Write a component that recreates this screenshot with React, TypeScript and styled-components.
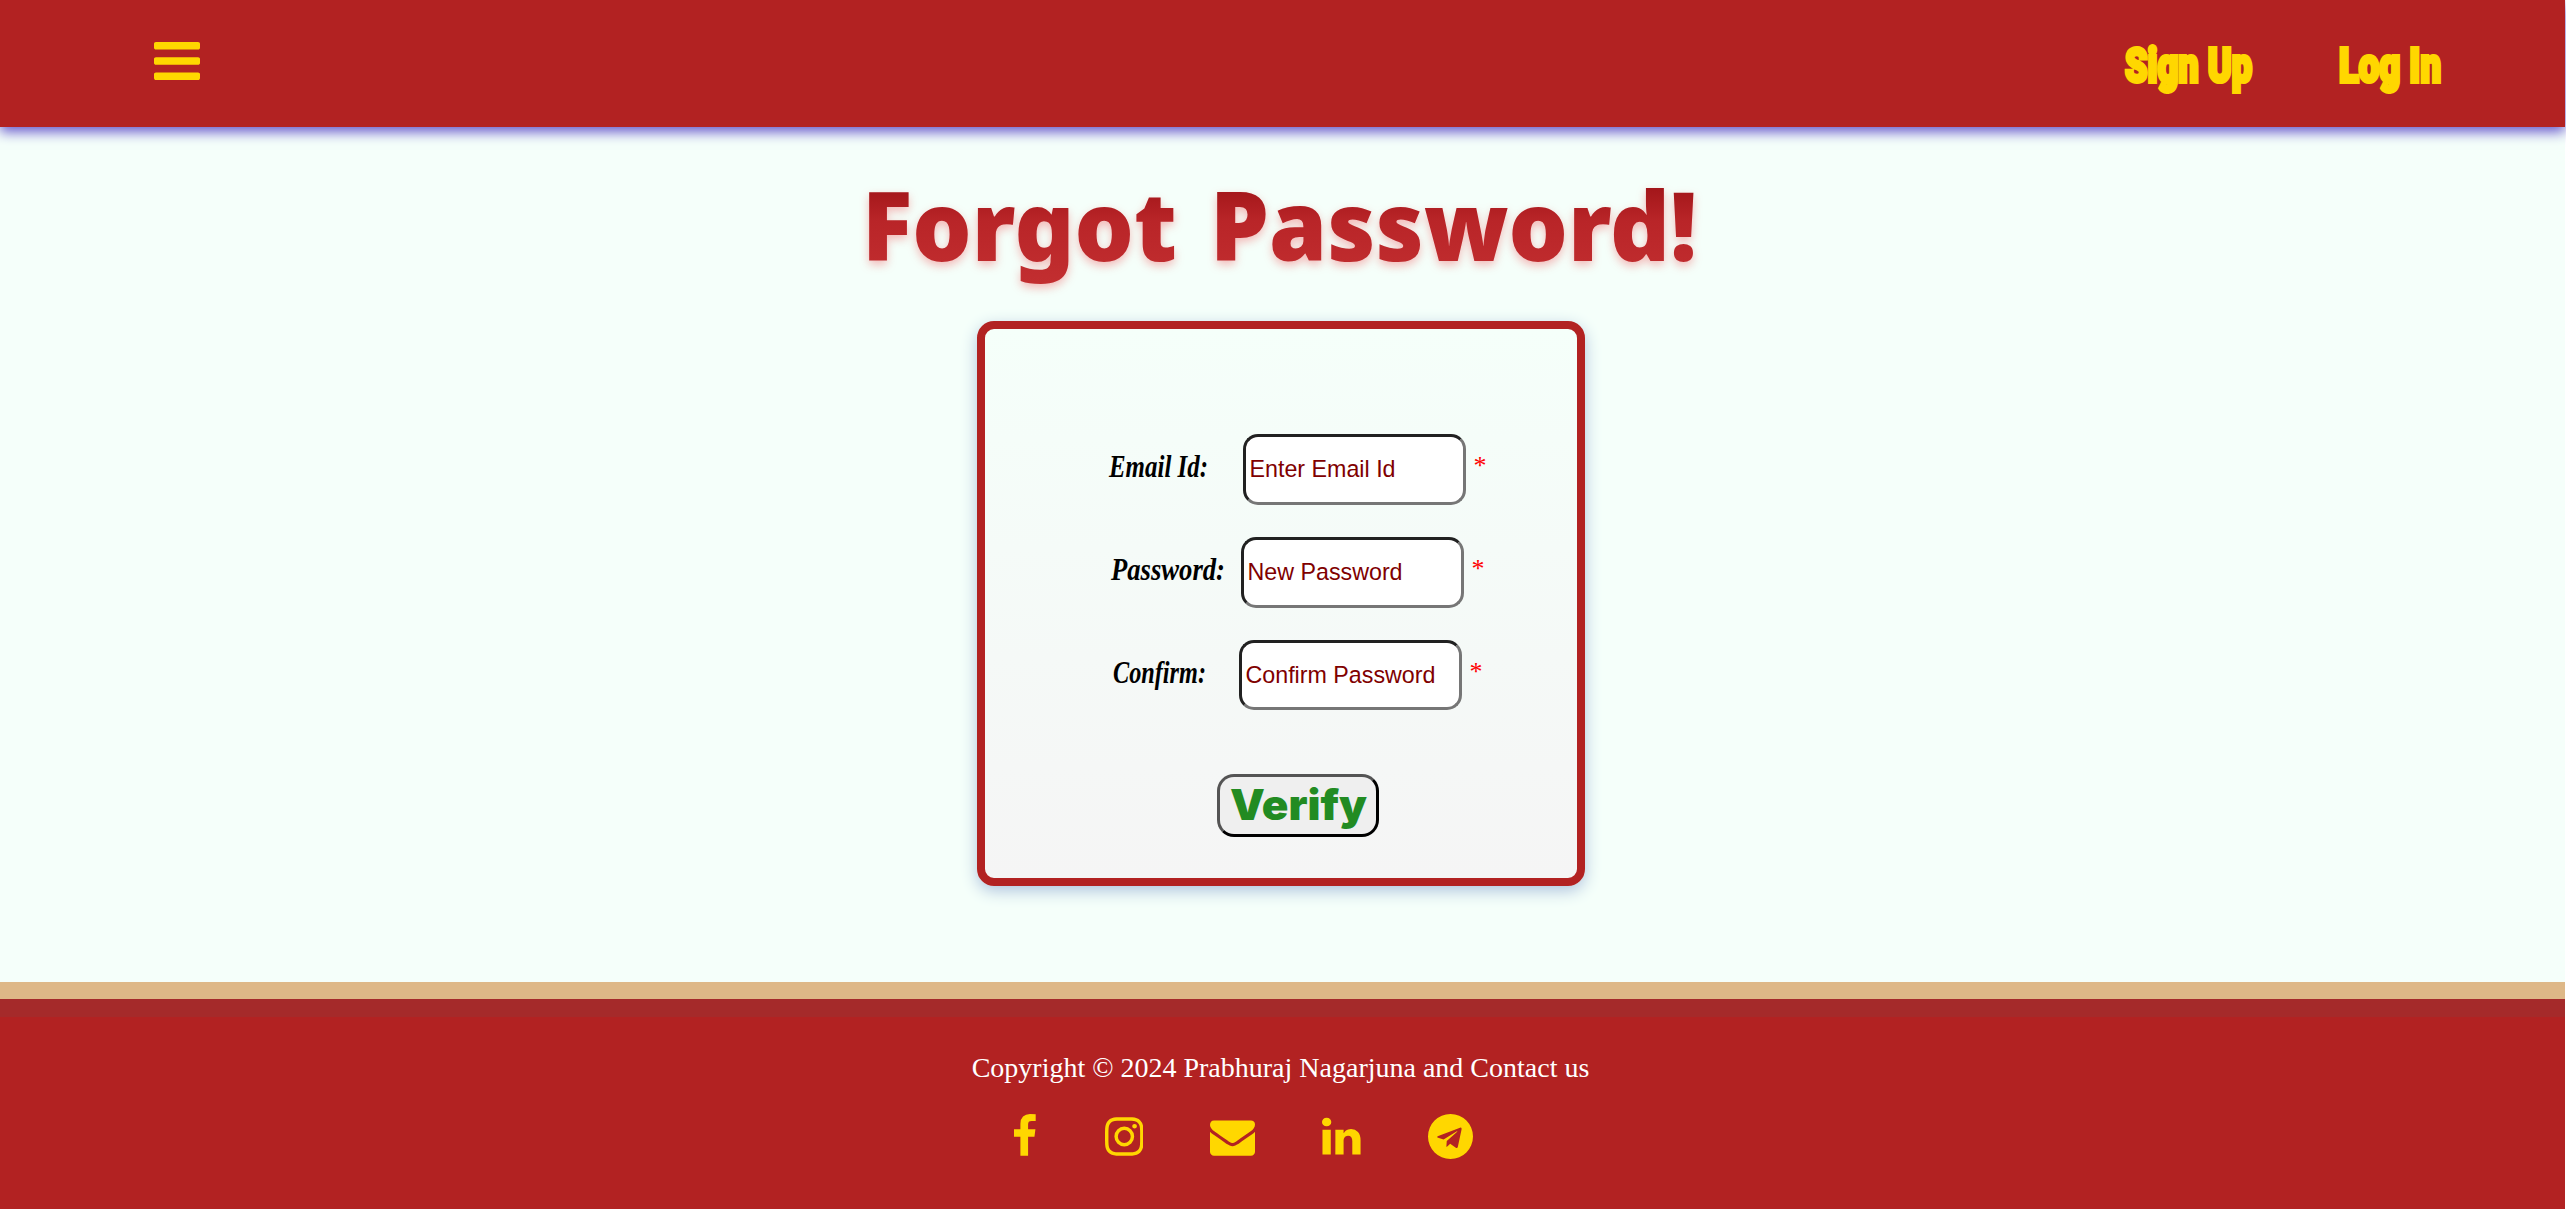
import React from "react";
import styled, { createGlobalStyle } from "styled-components";

const GlobalStyle = createGlobalStyle`
  * { box-sizing: border-box; }
  body { margin: 0; background: #fff; font-family: "Liberation Serif", "Times New Roman", serif; }
`;

const Page = styled.div`
  width: 2565px;
  height: 1209px;
  background: mintcream;
  display: flex;
  flex-direction: column;
`;

const Header = styled.header`
  height: 127px;
  flex: none;
  background: firebrick;
  box-shadow: 0 5px 12px slateblue;
  display: flex;
  justify-content: space-between;
  padding: 0 122px 0 153.5px;
`;

const MenuButton = styled.button`
  border: 0;
  padding: 0;
  margin-top: 42px;
  width: 46px;
  height: 38px;
  background: none;
  color: gold;
  svg { display: block; }
`;

const Nav = styled.nav`
  display: flex;
  gap: 86px;
  padding-top: 23px;
  svg { overflow: visible; }
`;

const NavText = styled.text`
  font: 900 49px Roboto, "Liberation Sans", sans-serif;
  fill: gold;
  stroke: gold;
  stroke-width: 4px;
`;

const Main = styled.main`
  flex: none;
  height: 855px;
  display: flex;
  flex-direction: column;
  align-items: center;
  padding-right: 4px;
`;

const TitleText = styled.text`
  font: 900 96px "Noto Sans", sans-serif;
  fill: url(#titleShade);
`;

const TitleWords = styled.g`
  filter: drop-shadow(0 4px 5px rgba(240, 80, 85, 0.4));
`;

const Title = styled.h1`
  margin: 36px 0 0;
  height: 158px;
  svg { display: block; overflow: visible; }
`;

const Card = styled.form`
  width: 608px;
  height: 565px;
  border: 8px solid firebrick;
  border-radius: 17px;
  background: linear-gradient(mintcream, whitesmoke);
  box-shadow: 0 5px 16px lightsteelblue;
  padding-top: 105px;
`;

const Fields = styled.div`
  display: flex;
  flex-direction: column;
  gap: 32px;
`;

const Row = styled.div<{ $indent: number; $height: number }>`
  display: flex;
  height: ${(p) => p.$height}px;
  margin-left: ${(p) => p.$indent}px;
  > svg { overflow: visible; }
`;

const LabelText = styled.text`
  font: italic 700 31px "Liberation Serif", serif;
  fill: #000;
`;

const Input = styled.input`
  width: 223px;
  height: 100%;
  border: 3px inset #767676;
  border-radius: 15px;
  padding: 2px 4px;
  background: #fff;
  font: 23.25px "Liberation Sans", Arial, sans-serif;
  &::placeholder { color: maroon; opacity: 1; }
`;

const Star = styled.span`
  margin: 17px 0 0 8px;
  color: red;
  font-size: 26px;
`;

const Verify = styled.button`
  display: block;
  width: 162px;
  height: 63px;
  margin: 64px 0 0 232px;
  padding: 0;
  border: 3px outset #000;
  border-radius: 17px;
  background: #efefef;
  svg { display: block; }
`;

const VerifyText = styled.text`
  font: 900 42px Inter, sans-serif;
  fill: forestgreen;
`;

const Footer = styled.footer`
  flex: 1;
  background: firebrick;
  display: flex;
  flex-direction: column;
  align-items: center;
  border-top: 17px solid burlywood;
`;

const Stripe = styled.div`
  align-self: stretch;
  height: 18px;
  background: brown;
`;

const Copyright = styled.p`
  margin: 33px 4px 0 0;
  font-size: 28px;
  line-height: 36px;
  color: #fff;
`;

const Social = styled.div`
  display: flex;
  align-items: center;
  height: 48px;
  margin: 26px 78px 0 0;
`;

const SocialLink = styled.a<{ $gap: number }>`
  margin-left: ${(p) => p.$gap}px;
  color: gold;
  svg { display: block; }
`;

const BARS =
  "M1536 1344v128q0 26-19 45t-45 19h-1408q-26 0-45-19t-19-45v-128q0-26 19-45t45-19h1408q26 0 45 19t19 45zm0-512v128q0 26-19 45t-45 19h-1408q-26 0-45-19t-19-45v-128q0-26 19-45t45-19h1408q26 0 45 19t19 45zm0-512v128q0 26-19 45t-45 19h-1408q-26 0-45-19t-19-45v-128q0-26 19-45t45-19h1408q26 0 45 19t19 45z";

const icons = [
  { name: "Facebook", gap: 0, box: [479, 0, 864, 1792], d: "M1343 12v264h-157q-86 0-116 36t-30 108v189h293l-39 296h-254v759h-306v-759h-255v-296h255v-218q0-186 104-288.500t277-102.500q147 0 228 12z" },
  { name: "Instagram", gap: 69, box: [128, 0, 1536, 1792], d: "M1152 896q0-106-75-181t-181-75-181 75-75 181 75 181 181 75 181-75 75-181zm138 0q0 164-115 279t-279 115-279-115-115-279 115-279 279-115 279 115 115 279zm108-410q0 38-27 65t-65 27-65-27-27-65 27-65 65-27 65 27 27 65zm-502-220q-7 0-76.500-.5t-105.500 0-96.500 3-103 10-71.500 18.500q-50 20-88 58t-58 88q-11 29-18.500 71.500t-10 103-3 96.500 0 105.500.5 76.500-.5 76.500 0 105.500 3 96.500 10 103 18.500 71.500q20 50 58 88t88 58q29 11 71.500 18.500t103 10 96.500 3 105.500 0 76.500-.5 76.500.5 105.500 0 96.500-3 103-10 71.500-18.500q50-20 88-58t58-88q11-29 18.500-71.500t10-103 3-96.500 0-105.500-.5-76.500.5-76.500 0-105.500-3-96.500-10-103-18.500-71.500q-20-50-58-88t-88-58q-29-11-71.500-18.500t-103-10-96.500-3-105.500 0-76.500.5zm768 630q0 229-5 317-10 208-124 322t-322 124q-88 5-317 5t-317-5q-208-10-322-124t-124-322q-5-88-5-317t5-317q10-208 124-322t322-124q88-5 317-5t317 5q208 10 322 124t124 322q5 88 5 317z" },
  { name: "Email", gap: 67, box: [0, 0, 1792, 1792], d: "M1792 710v794q0 66-47 113t-113 47h-1472q-66 0-113-47t-47-113v-794q44 49 101 87 362 246 497 345 57 42 92.500 65.500t94.500 48 110 24.500h2q51 0 110-24.500t94.500-48 92.500-65.500q170-123 498-345 57-39 100-87zm0-294q0 79-49 151t-122 123q-376 261-468 325-10 7-42.500 30.500t-54 38-52 32.500-57.500 27-50 9h-2q-23 0-50-9t-57.500-27-52-32.500-54-38-42.500-30.500q-91-64-262-182.500t-205-142.500q-62-42-117-115.500t-55-136.500q0-78 41.500-130t118.500-52h1472q65 0 112.500 47t47.500 113z" },
  { name: "LinkedIn", gap: 67, box: [128, 0, 1536, 1792], d: "M477 625v991h-330v-991h330zm21-306q1 73-50.500 122t-135.500 49h-2q-82 0-132-49t-50-122q0-74 51.500-122.500t134.500-48.500 133 48.500 51 122.500zm1166 729v568h-329v-530q0-105-40.500-164.500t-126.500-59.500q-63 0-105.500 34.500t-63.500 85.500q-11 30-11 81v553h-329q2-399 2-647t-1-296l-1-48h329v144h-2q20-32 41-56t56.500-52 87-43.500 114.500-15.500q171 0 275 113.500t104 332.500z" },
  { name: "Telegram", gap: 67, box: [0, 0, 1792, 1792], d: "M1189 1307l147-693q9-44-10.500-63t-51.500-7l-864 333q-29 11-39.500 25t-2.500 26.500 32 19.500l221 69 513-323q21-14 32-6 7 5-4 15l-415 375-16 228q23 0 45-22l108-104 224 165q64 36 81-38zm603-411q0 182-71 348t-191 286-286 191-348 71-348-71-286-191-191-286-71-348 71-348 191-286 286-191 348-71 348 71 286 191 191 286 71 348z" },
];

const fields = [
  { label: "Email Id:", w: 99, hint: "Enter Email Id", labelW: 134, indent: 124, h: 71 },
  { label: "Password:", w: 114, hint: "New Password", labelW: 130, indent: 126, h: 71 },
  { label: "Confirm:", w: 93, hint: "Confirm Password", labelW: 126, indent: 128, h: 70 },
];

export default function App() {
  return (
    <>
      <GlobalStyle />
      <Page>
        <Header>
          <MenuButton aria-label="Menu">
            <svg width="46" height="38" viewBox="0 256 1536 1280" preserveAspectRatio="none" fill="currentColor"><path d={BARS} /></svg>
          </MenuButton>
          <Nav>
            <svg width="129" height="80">
              <NavText x="1" y="58.500" textLength="127" lengthAdjust="spacingAndGlyphs">Sign Up</NavText>
            </svg>
            <svg width="104" height="80">
              <NavText x="0" y="58.500" textLength="102" lengthAdjust="spacingAndGlyphs">Log In</NavText>
            </svg>
          </Nav>
        </Header>
        <Main>
          <Title>
            <svg width="830" height="158">
              <defs>
                <linearGradient id="titleShade" gradientUnits="userSpaceOnUse" x1="0" y1="25" x2="0" y2="120">
                  <stop offset="0" stopColor="#a3161a" />
                  <stop offset="0.35" stopColor="#b92528" />
                  <stop offset="1" stopColor="#c22e30" />
                </linearGradient>
              </defs>
              <TitleWords>
                <TitleText x="-4" y="98" textLength="315" lengthAdjust="spacingAndGlyphs">Forgot</TitleText>
                <TitleText x="344" y="98" textLength="487" lengthAdjust="spacingAndGlyphs">Password!</TitleText>
              </TitleWords>
            </svg>
          </Title>
          <Card>
            <Fields>
              {fields.map((f) => (
                <Row key={f.label} $indent={f.indent} $height={f.h}>
                  <svg width={f.labelW} height="70"><LabelText x="0" y="43" textLength={f.w} lengthAdjust="spacingAndGlyphs">{f.label}</LabelText></svg>
                  <Input placeholder={f.hint} />
                  <Star>*</Star>
                </Row>
              ))}
            </Fields>
            <Verify type="button">
              <svg width="156" height="57"><VerifyText x="10" y="43" textLength="137" lengthAdjust="spacingAndGlyphs">Verify</VerifyText></svg>
            </Verify>
          </Card>
        </Main>
        <Footer>
          <Stripe />
          <Copyright>Copyright © 2024 Prabhuraj Nagarjuna and Contact us</Copyright>
          <Social>
            {icons.map((i) => (
              <SocialLink key={i.name} $gap={i.gap} aria-label={i.name}>
                <svg height="45" width={(i.box[2] * 45) / 1792} viewBox={i.box.join(" ")} fill="currentColor"><path d={i.d} /></svg>
              </SocialLink>
            ))}
          </Social>
        </Footer>
      </Page>
    </>
  );
}
